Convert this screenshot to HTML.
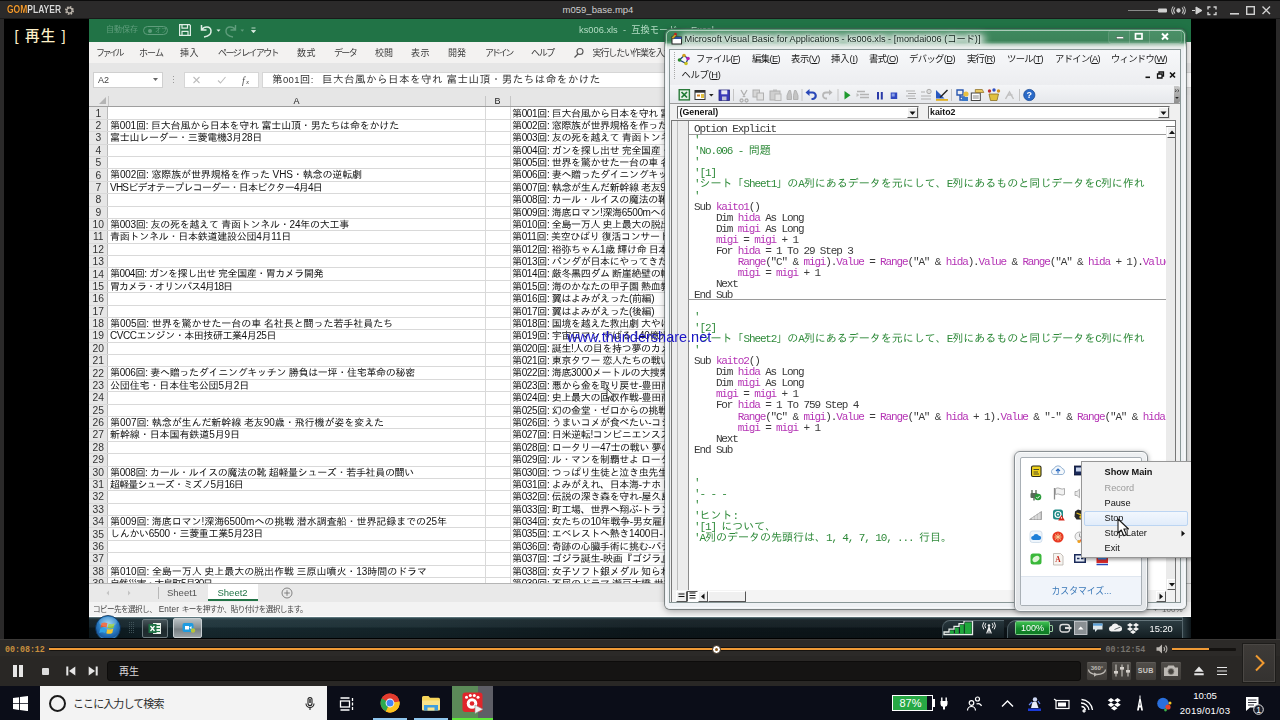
<!DOCTYPE html>
<html lang="ja"><head><meta charset="utf-8"><title>GOM Player - m059_base.mp4</title>
<style>
html,body{margin:0;padding:0;}
body{width:1280px;height:720px;overflow:hidden;background:#000;position:relative;font-family:"Liberation Sans","Noto Sans CJK JP",sans-serif;}
.a{position:absolute;}
div{box-sizing:border-box;}
.ui{font-family:"Liberation Sans","Noto Sans CJK JP",sans-serif;}
.cell{font-family:"Liberation Sans","IPAGothic",sans-serif;font-size:10px;line-height:12px;white-space:nowrap;color:#111;}
.rn{position:absolute;left:0;width:18.5px;text-align:center;font-size:10.3px;line-height:12px;color:#333;font-family:"Liberation Sans",sans-serif;}
.code{font-family:"Liberation Mono","IPAGothic",monospace;font-size:11px;letter-spacing:-1.13px;white-space:pre;position:absolute;left:22px;height:11px;line-height:11px;color:#3a3a3a;}
.code b{font-weight:normal;color:#b534b5;}
.code i{font-style:normal;color:#2f8a3a;}
.code u{text-decoration:none;letter-spacing:0;}
</style></head><body>

<div class="a" id="gomtitle" style="left:0;top:0;width:1280px;height:19px;background:#2b2a2a;border-top:1px solid #0c0c0c;border-bottom:1px solid #1a1a1a;"></div>
<div class="a" style="left:0;top:19px;width:4px;height:620px;background:#2a2929;"></div>
<div class="a" style="left:1276px;top:19px;width:4px;height:620px;background:#2a2929;"></div>
<div class="a ui" style="left:7px;top:3.5px;font-size:10.3px;line-height:12px;font-weight:bold;color:#d9d9d9;text-shadow:0 0 1px #000;transform-origin:0 0;transform:scaleX(0.826);white-space:nowrap;"><span style="color:#f29a2e">GOM</span>PLAYER</div>
<svg class="a" style="left:64px;top:5px" width="11" height="11" viewBox="0 0 11 11"><circle cx="5.5" cy="5.5" r="3.6" fill="none" stroke="#bdb6ad" stroke-width="1.8" stroke-dasharray="1.6 1.2"/><circle cx="5.5" cy="5.5" r="2.6" fill="none" stroke="#bdb6ad" stroke-width="1.2"/></svg>
<div class="a ui" style="left:540px;top:4px;width:116px;text-align:center;font-size:9.5px;line-height:12px;color:#cfcfcf;">m059_base.mp4</div>
<svg class="a" style="left:1120px;top:0" width="160" height="19" viewBox="0 0 160 19">
<rect x="8" y="10" width="32" height="1" fill="#8a8a8a"/><rect x="38" y="8.5" width="9" height="4" rx="1" fill="#d0d0d0"/>
<g stroke="#d0d0d0" fill="none" stroke-width="1.1"><circle cx="58.5" cy="10.5" r="1.6" fill="#d0d0d0"/><path d="M55 7.5a4.5 4.5 0 0 0 0 6M62 7.5a4.5 4.5 0 0 1 0 6M53.3 6.5a6 6 0 0 0 0 8M63.7 6.5a6 6 0 0 1 0 8"/></g>
<path d="M72 10.5h3M76 7v7l6-3.5z" fill="#d0d0d0" stroke="#d0d0d0" stroke-width="1"/>
<g stroke="#d0d0d0" fill="none" stroke-width="1.4"><path d="M88 9.5v-2.5h2.5M93.500 7h2.500v2.500M96 12v2.500h-2.500M90.500 14.500h-2.500v-2.500"/></g>
<rect x="110" y="13" width="9" height="1.6" fill="#d0d0d0"/>
<rect x="126.700" y="6.700" width="7.600" height="7.600" fill="none" stroke="#d0d0d0" stroke-width="1.4"/>
<path d="M142.500 6.500l7.500 7.500M150 6.500l-7.500 7.500" stroke="#d0d0d0" stroke-width="1.4"/>
</svg>
<div class="a" style="left:14.5px;top:27px;font-size:14.5px;line-height:19px;letter-spacing:1.2px;font-weight:500;color:#fdf0c8;font-family:'Liberation Sans','Noto Sans CJK JP',sans-serif;white-space:nowrap;">[ 再生 ]</div>
<div class="a" id="video" style="left:89px;top:19px;width:1102px;height:619px;overflow:hidden;background:#fff;filter:blur(0.45px);">
<div class="a" style="left:0px;top:0px;width:1102px;height:23px;background:#217346;"></div>
<div class="a ui" style="left:17px;top:6px;font-size:8px;line-height:10px;color:#5f9d7c;white-space:nowrap;">自動保存</div>
<div class="a" style="left:54px;top:7px;width:25px;height:9px;border:1px solid #5f9d7c;border-radius:5px;"></div>
<div class="a" style="left:59px;top:9.5px;width:4px;height:4px;border-radius:2px;background:#5f9d7c;"></div>
<div class="a ui" style="left:66px;top:8px;font-size:6px;line-height:7px;color:#5f9d7c;">オフ</div>
<svg class="a" style="left:86px;top:2px;" width="90" height="18" viewBox="0 0 90 18">
<g fill="none" stroke="#dfeee5" stroke-width="1.2"><path d="M4.600 3.600h9.800l1 1v9.800h-10.800z"/><path d="M7 3.600v3.500h5.500v-3.500M7 14.400v-4h6v4"/>
<path d="M26.500 4v5h5M27 8.500c2-3.500 8.500-3.500 9 1s-4 6-7 6.500" stroke-width="1.5"/></g>
<path d="M41.500 8.500h4l-2 2.300z" fill="#dfeee5"/>
<g fill="none" stroke="#5f9d7c" stroke-width="1.400"><path d="M60.500 4v5h-5M60 8.500c-2-3.500-8.500-3.500-9 1s4 6 7 6.500"/></g>
<path d="M65.500 8.500h3.600l-1.800 2.200z" fill="#5f9d7c"/>
<path d="M76.500 7h4M76.500 9.500h4l-2 2.300z" fill="#dfeee5" stroke="#dfeee5" stroke-width="0.800"/>
</svg>
<div class="a ui" style="left:490px;top:5px;font-size:9.3px;line-height:12px;color:#b4dcc4;white-space:pre;">ks006.xls  -  互換モード  -  Excel</div>
<div class="a" style="left:0px;top:23px;width:1102px;height:20.5px;background:#f3f2f1;"></div>
<div class="a ui" style="letter-spacing:-2.504px;left:7px;top:28px;font-size:9px;line-height:12px;color:#3b3b3b;white-space:nowrap;">ファイル</div>
<div class="a ui" style="letter-spacing:-0.911px;left:50px;top:28px;font-size:9px;line-height:12px;color:#3b3b3b;white-space:nowrap;">ホーム</div>
<div class="a ui" style="letter-spacing:0.492px;left:91px;top:28px;font-size:9px;line-height:12px;color:#3b3b3b;white-space:nowrap;">挿入</div>
<div class="a ui" style="letter-spacing:-1.592px;left:129px;top:28px;font-size:9px;line-height:12px;color:#3b3b3b;white-space:nowrap;">ページ レイアウト</div>
<div class="a ui" style="letter-spacing:0.492px;left:208px;top:28px;font-size:9px;line-height:12px;color:#3b3b3b;white-space:nowrap;">数式</div>
<div class="a ui" style="letter-spacing:-1.672px;left:245px;top:28px;font-size:9px;line-height:12px;color:#3b3b3b;white-space:nowrap;">データ</div>
<div class="a ui" style="letter-spacing:-0.008px;left:286px;top:28px;font-size:9px;line-height:12px;color:#3b3b3b;white-space:nowrap;">校閲</div>
<div class="a ui" style="letter-spacing:0.492px;left:322px;top:28px;font-size:9px;line-height:12px;color:#3b3b3b;white-space:nowrap;">表示</div>
<div class="a ui" style="letter-spacing:-0.008px;left:359px;top:28px;font-size:9px;line-height:12px;color:#3b3b3b;white-space:nowrap;">開発</div>
<div class="a ui" style="letter-spacing:-2.254px;left:396px;top:28px;font-size:9px;line-height:12px;color:#3b3b3b;white-space:nowrap;">アドイン</div>
<div class="a ui" style="letter-spacing:-1.339px;left:442px;top:28px;font-size:9px;line-height:12px;color:#3b3b3b;white-space:nowrap;">ヘルプ</div>
<div class="a ui" style="letter-spacing:-1.092px;left:503.5px;top:28px;font-size:9px;line-height:12px;color:#3b3b3b;white-space:nowrap;">実行したい作業を入力してください</div>
<svg class="a" style="left:484px;top:28px;" width="12" height="12" viewBox="0 0 12 12"><circle cx="7" cy="4.500" r="3" fill="none" stroke="#555" stroke-width="1.100"/><path d="M5 7l-3.500 3.500" stroke="#555" stroke-width="1.300"/></svg>
<div class="a" style="left:0px;top:43.5px;width:1102px;height:33px;background:#e6e6e6;"></div>
<div class="a" style="left:4px;top:52.5px;width:70px;height:16px;background:#fff;border:1px solid #d0d0d0;"></div>
<div class="a" style="left:9px;top:54.5px;font-family:'Liberation Sans',sans-serif;font-size:9px;line-height:12px;color:#444;">A2</div>
<svg class="a" style="left:63px;top:58px;" width="8" height="6" viewBox="0 0 8 6"><path d="M1 1h5l-2.500 3z" fill="#666"/></svg>
<div class="a" style="left:84px;top:56.5px;width:1px;height:1.5px;background:#999;box-shadow:0 3px 0 #999,0 6px 0 #999;"></div>
<div class="a" style="left:94.5px;top:52.5px;width:75px;height:16px;background:#fff;border:1px solid #d6d6d6;"></div>
<svg class="a" style="left:94.5px;top:52.5px;" width="75" height="16" viewBox="0 0 75 16">
<path d="M9.500 5l6 6M15.500 5l-6 6" stroke="#bdbdbd" stroke-width="1.100" fill="none"/>
<path d="M34 8.500l2.500 2.500l5-6" stroke="#bdbdbd" stroke-width="1.100" fill="none"/>
<text x="58" y="11.500" font-family="Liberation Serif, serif" font-style="italic" font-size="10" fill="#555">f</text><text x="62" y="12" font-family="Liberation Serif, serif" font-style="italic" font-size="7" fill="#555">x</text>
</svg>
<div class="a" style="left:172.5px;top:52.5px;width:930px;height:16px;background:#fff;border:1px solid #d6d6d6;"></div>
<div class="a" id="ftext" style="left:183px;top:54px;font-family:'Liberation Sans','IPAGothic',sans-serif;font-size:10.5px;line-height:13px;color:#333;white-space:nowrap;letter-spacing:0.52px;">第<span style="font-size:9.500px;letter-spacing:0.300px">001</span>回<span style="font-size:9.500px;letter-spacing:2.900px">: </span>巨大台風から日本を守れ 富士山頂・男たちは命をかけた</div>
<div class="a" style="left:0px;top:76px;width:1102px;height:12px;background:#e6e6e6;border-bottom:1px solid #9f9f9f;"></div>
<svg class="a" style="left:10px;top:78px;" width="8" height="8" viewBox="0 0 8 8"><path d="M7 0v7h-7z" fill="#b4b4b4"/></svg>
<div class="a" style="left:19px;top:76.5px;width:377px;text-align:center;font-family:'Liberation Sans',sans-serif;font-size:9px;line-height:11px;color:#222;">A</div>
<div class="a" style="left:396px;top:76.5px;width:25px;text-align:center;font-family:'Liberation Sans',sans-serif;font-size:9px;line-height:11px;color:#222;">B</div>
<div class="a" style="left:396px;top:77px;width:1px;height:10px;background:#c6c6c6;"></div>
<div class="a" style="left:421px;top:77px;width:1px;height:10px;background:#c6c6c6;"></div>
<div class="a" style="left:19px;top:77px;width:1px;height:10px;background:#c6c6c6;"></div>
<div class="a" id="grid" style="left:0px;top:88px;width:1102px;height:476px;background:#fff;overflow:hidden;">
<div class="a" style="left:0;top:0;width:19px;height:476px;background:#e6e6e6;border-right:1px solid #b9b9b9;"></div>
<div class="a" style="left:0;top:11.88px;width:1102px;height:1px;background:#d9d9d9;"></div>
<div class="rn" style="top:0.60px;">1</div>
<div class="a cell cc" style="letter-spacing:-0.35px;left:423px;top:0.50px;">第001回: 巨大台風から日本を守れ 富士山頂</div>
<div class="a" style="left:0;top:24.26px;width:1102px;height:1px;background:#d9d9d9;"></div>
<div class="rn" style="top:12.98px;">2</div>
<div class="a cell ca" style="letter-spacing:-0.183px;left:21px;top:12.88px;">第001回: 巨大台風から日本を守れ 富士山頂・男たちは命をかけた</div>
<div class="a cell cc" style="letter-spacing:-0.35px;left:423px;top:12.88px;">第002回: 窓際族が世界規格を作った VHS</div>
<div class="a" style="left:0;top:36.64px;width:1102px;height:1px;background:#d9d9d9;"></div>
<div class="rn" style="top:25.36px;">3</div>
<div class="a cell ca" style="letter-spacing:-0.276px;left:21px;top:25.26px;">富士山レーダー・三菱電機3月28日</div>
<div class="a cell cc" style="letter-spacing:-0.35px;left:423px;top:25.26px;">第003回: 友の死を越えて 青函トンネル</div>
<div class="a" style="left:0;top:49.02px;width:1102px;height:1px;background:#d9d9d9;"></div>
<div class="rn" style="top:37.74px;">4</div>
<div class="a cell cc" style="letter-spacing:-0.35px;left:423px;top:37.64px;">第004回: ガンを探し出せ 完全国産・胃カメラ</div>
<div class="a" style="left:0;top:61.40px;width:1102px;height:1px;background:#d9d9d9;"></div>
<div class="rn" style="top:50.12px;">5</div>
<div class="a cell cc" style="letter-spacing:-0.35px;left:423px;top:50.02px;">第005回: 世界を驚かせた一台の車 名社長</div>
<div class="a" style="left:0;top:73.78px;width:1102px;height:1px;background:#d9d9d9;"></div>
<div class="rn" style="top:62.50px;">6</div>
<div class="a cell ca" style="letter-spacing:-0.120px;left:21px;top:62.40px;">第002回: 窓際族が世界規格を作った VHS・執念の逆転劇</div>
<div class="a cell cc" style="letter-spacing:-0.35px;left:423px;top:62.40px;">第006回: 妻へ贈ったダイニングキッチン 勝負</div>
<div class="a" style="left:0;top:86.16px;width:1102px;height:1px;background:#d9d9d9;"></div>
<div class="rn" style="top:74.88px;">7</div>
<div class="a cell ca" style="letter-spacing:-0.787px;left:21px;top:74.78px;">VHSビデオテープレコーダー・日本ビクター4月4日</div>
<div class="a cell cc" style="letter-spacing:-0.35px;left:423px;top:74.78px;">第007回: 執念が生んだ新幹線 老友90歳</div>
<div class="a" style="left:0;top:98.54px;width:1102px;height:1px;background:#d9d9d9;"></div>
<div class="rn" style="top:87.26px;">8</div>
<div class="a cell cc" style="letter-spacing:-0.35px;left:423px;top:87.16px;">第008回: カール・ルイスの魔法の靴 超軽量</div>
<div class="a" style="left:0;top:110.92px;width:1102px;height:1px;background:#d9d9d9;"></div>
<div class="rn" style="top:99.64px;">9</div>
<div class="a cell cc" style="letter-spacing:-0.35px;left:423px;top:99.54px;">第009回: 海底ロマン!深海6500mへの挑戦</div>
<div class="a" style="left:0;top:123.30px;width:1102px;height:1px;background:#d9d9d9;"></div>
<div class="rn" style="top:112.02px;">10</div>
<div class="a cell ca" style="letter-spacing:-0.247px;left:21px;top:111.92px;">第003回: 友の死を越えて 青函トンネル・24年の大工事</div>
<div class="a cell cc" style="letter-spacing:-0.35px;left:423px;top:111.92px;">第010回: 全島一万人 史上最大の脱出作戦</div>
<div class="a" style="left:0;top:135.68px;width:1102px;height:1px;background:#d9d9d9;"></div>
<div class="rn" style="top:124.40px;">11</div>
<div class="a cell ca" style="letter-spacing:-0.248px;left:21px;top:124.30px;">青函トンネル・日本鉄道建設公団4月11日</div>
<div class="a cell cc" style="letter-spacing:-0.35px;left:423px;top:124.30px;">第011回: 美空ひばり 復活コンサート</div>
<div class="a" style="left:0;top:148.06px;width:1102px;height:1px;background:#d9d9d9;"></div>
<div class="rn" style="top:136.78px;">12</div>
<div class="a cell cc" style="letter-spacing:-0.35px;left:423px;top:136.68px;">第012回: 裕弥ちゃん1歳 輝け命 日本初</div>
<div class="a" style="left:0;top:160.44px;width:1102px;height:1px;background:#d9d9d9;"></div>
<div class="rn" style="top:149.16px;">13</div>
<div class="a cell cc" style="letter-spacing:-0.35px;left:423px;top:149.06px;">第013回: パンダが日本にやってきた</div>
<div class="a" style="left:0;top:172.82px;width:1102px;height:1px;background:#d9d9d9;"></div>
<div class="rn" style="top:161.54px;">14</div>
<div class="a cell ca" style="letter-spacing:-0.463px;left:21px;top:161.44px;">第004回: ガンを探し出せ 完全国産・胃カメラ開発</div>
<div class="a cell cc" style="letter-spacing:-0.35px;left:423px;top:161.44px;">第014回: 厳冬黒四ダム 断崖絶壁の輸送</div>
<div class="a" style="left:0;top:185.20px;width:1102px;height:1px;background:#d9d9d9;"></div>
<div class="rn" style="top:173.92px;">15</div>
<div class="a cell ca" style="letter-spacing:-0.979px;left:21px;top:173.82px;">胃カメラ・オリンパス4月18日</div>
<div class="a cell cc" style="letter-spacing:-0.35px;left:423px;top:173.82px;">第015回: 海のかなたの甲子園 熱血教師</div>
<div class="a" style="left:0;top:197.58px;width:1102px;height:1px;background:#d9d9d9;"></div>
<div class="rn" style="top:186.30px;">16</div>
<div class="a cell cc" style="letter-spacing:-0.35px;left:423px;top:186.20px;">第016回: 翼はよみがえった(前編)</div>
<div class="a" style="left:0;top:209.96px;width:1102px;height:1px;background:#d9d9d9;"></div>
<div class="rn" style="top:198.68px;">17</div>
<div class="a cell cc" style="letter-spacing:-0.35px;left:423px;top:198.58px;">第017回: 翼はよみがえった(後編)</div>
<div class="a" style="left:0;top:222.34px;width:1102px;height:1px;background:#d9d9d9;"></div>
<div class="rn" style="top:211.06px;">18</div>
<div class="a cell ca" style="letter-spacing:-0.063px;left:21px;top:210.96px;">第005回: 世界を驚かせた一台の車 名社長と闘った若手社員たち</div>
<div class="a cell cc" style="letter-spacing:-0.35px;left:423px;top:210.96px;">第018回: 国境を越えた救出劇 大やけど</div>
<div class="a" style="left:0;top:234.72px;width:1102px;height:1px;background:#d9d9d9;"></div>
<div class="rn" style="top:223.44px;">19</div>
<div class="a cell ca" style="letter-spacing:-0.452px;left:21px;top:223.34px;">CVCCエンジン・本田技研工業4月25日</div>
<div class="a cell cc" style="letter-spacing:-0.35px;left:423px;top:223.34px;">第019回: 宇宙ロマン すばる 140億光年</div>
<div class="a" style="left:0;top:247.10px;width:1102px;height:1px;background:#d9d9d9;"></div>
<div class="rn" style="top:235.82px;">20</div>
<div class="a cell cc" style="letter-spacing:-0.35px;left:423px;top:235.72px;">第020回: 誕生!人の目を持つ夢のカメラ</div>
<div class="a" style="left:0;top:259.48px;width:1102px;height:1px;background:#d9d9d9;"></div>
<div class="rn" style="top:248.20px;">21</div>
<div class="a cell cc" style="letter-spacing:-0.35px;left:423px;top:248.10px;">第021回: 東京タワー 恋人たちの戦い</div>
<div class="a" style="left:0;top:271.86px;width:1102px;height:1px;background:#d9d9d9;"></div>
<div class="rn" style="top:260.58px;">22</div>
<div class="a cell ca" style="letter-spacing:-0.287px;left:21px;top:260.48px;">第006回: 妻へ贈ったダイニングキッチン 勝負は一坪・住宅革命の秘密</div>
<div class="a cell cc" style="letter-spacing:-0.35px;left:423px;top:260.48px;">第022回: 海底3000メートルの大捜索</div>
<div class="a" style="left:0;top:284.24px;width:1102px;height:1px;background:#d9d9d9;"></div>
<div class="rn" style="top:272.96px;">23</div>
<div class="a cell ca" style="letter-spacing:-0.142px;left:21px;top:272.86px;">公団住宅・日本住宅公団5月2日</div>
<div class="a cell cc" style="letter-spacing:-0.35px;left:423px;top:272.86px;">第023回: 悪から金を取り戻せ-豊田商事</div>
<div class="a" style="left:0;top:296.62px;width:1102px;height:1px;background:#d9d9d9;"></div>
<div class="rn" style="top:285.34px;">24</div>
<div class="a cell cc" style="letter-spacing:-0.35px;left:423px;top:285.24px;">第024回: 史上最大の回収作戦-豊田商事</div>
<div class="a" style="left:0;top:309.00px;width:1102px;height:1px;background:#d9d9d9;"></div>
<div class="rn" style="top:297.72px;">25</div>
<div class="a cell cc" style="letter-spacing:-0.35px;left:423px;top:297.62px;">第025回: 幻の金堂・ゼロからの挑戦</div>
<div class="a" style="left:0;top:321.38px;width:1102px;height:1px;background:#d9d9d9;"></div>
<div class="rn" style="top:310.10px;">26</div>
<div class="a cell ca" style="letter-spacing:-0.067px;left:21px;top:310.00px;">第007回: 執念が生んだ新幹線 老友90歳・飛行機が姿を変えた</div>
<div class="a cell cc" style="letter-spacing:-0.35px;left:423px;top:310.00px;">第026回: うまいコメが食べたい-コシヒカリ</div>
<div class="a" style="left:0;top:333.76px;width:1102px;height:1px;background:#d9d9d9;"></div>
<div class="rn" style="top:322.48px;">27</div>
<div class="a cell ca" style="letter-spacing:-0.080px;left:21px;top:322.38px;">新幹線・日本国有鉄道5月9日</div>
<div class="a cell cc" style="letter-spacing:-0.35px;left:423px;top:322.38px;">第027回: 日米逆転!コンビニエンスストア</div>
<div class="a" style="left:0;top:346.14px;width:1102px;height:1px;background:#d9d9d9;"></div>
<div class="rn" style="top:334.86px;">28</div>
<div class="a cell cc" style="letter-spacing:-0.35px;left:423px;top:334.76px;">第028回: ロータリー47士の戦い 夢のエンジン</div>
<div class="a" style="left:0;top:358.52px;width:1102px;height:1px;background:#d9d9d9;"></div>
<div class="rn" style="top:347.24px;">29</div>
<div class="a cell cc" style="letter-spacing:-0.35px;left:423px;top:347.14px;">第029回: ル・マンを制覇せよ ロータリー</div>
<div class="a" style="left:0;top:370.90px;width:1102px;height:1px;background:#d9d9d9;"></div>
<div class="rn" style="top:359.62px;">30</div>
<div class="a cell ca" style="letter-spacing:-0.315px;left:21px;top:359.52px;">第008回: カール・ルイスの魔法の靴 超軽量シューズ・若手社員の闘い</div>
<div class="a cell cc" style="letter-spacing:-0.35px;left:423px;top:359.52px;">第030回: つっぱり生徒と泣き虫先生</div>
<div class="a" style="left:0;top:383.28px;width:1102px;height:1px;background:#d9d9d9;"></div>
<div class="rn" style="top:372.00px;">31</div>
<div class="a cell ca" style="letter-spacing:-0.855px;left:21px;top:371.90px;">超軽量シューズ・ミズノ5月16日</div>
<div class="a cell cc" style="letter-spacing:-0.35px;left:423px;top:371.90px;">第031回: よみがえれ、日本海-ナホトカ号</div>
<div class="a" style="left:0;top:395.66px;width:1102px;height:1px;background:#d9d9d9;"></div>
<div class="rn" style="top:384.38px;">32</div>
<div class="a cell cc" style="letter-spacing:-0.35px;left:423px;top:384.28px;">第032回: 伝説の深き森を守れ-屋久島</div>
<div class="a" style="left:0;top:408.04px;width:1102px;height:1px;background:#d9d9d9;"></div>
<div class="rn" style="top:396.76px;">33</div>
<div class="a cell cc" style="letter-spacing:-0.35px;left:423px;top:396.66px;">第033回: 町工場、世界へ翔ぶ-トランジスタ</div>
<div class="a" style="left:0;top:420.42px;width:1102px;height:1px;background:#d9d9d9;"></div>
<div class="rn" style="top:409.14px;">34</div>
<div class="a cell ca" style="letter-spacing:-0.061px;left:21px;top:409.04px;">第009回: 海底ロマン!深海6500mへの挑戦 潜水調査船・世界記録までの25年</div>
<div class="a cell cc" style="letter-spacing:-0.35px;left:423px;top:409.04px;">第034回: 女たちの10年戦争-男女雇用</div>
<div class="a" style="left:0;top:432.80px;width:1102px;height:1px;background:#d9d9d9;"></div>
<div class="rn" style="top:421.52px;">35</div>
<div class="a cell ca" style="letter-spacing:-0.312px;left:21px;top:421.42px;">しんかい6500・三菱重工業5月23日</div>
<div class="a cell cc" style="letter-spacing:-0.35px;left:423px;top:421.42px;">第035回: エベレストへ熱き1400日-日本女子</div>
<div class="a" style="left:0;top:445.18px;width:1102px;height:1px;background:#d9d9d9;"></div>
<div class="rn" style="top:433.90px;">36</div>
<div class="a cell cc" style="letter-spacing:-0.35px;left:423px;top:433.80px;">第036回: 奇跡の心臓手術に挑む-バチスタ</div>
<div class="a" style="left:0;top:457.56px;width:1102px;height:1px;background:#d9d9d9;"></div>
<div class="rn" style="top:446.28px;">37</div>
<div class="a cell cc" style="letter-spacing:-0.35px;left:423px;top:446.18px;">第037回: ゴジラ誕生-映画『ゴジラ』特撮</div>
<div class="a" style="left:0;top:469.94px;width:1102px;height:1px;background:#d9d9d9;"></div>
<div class="rn" style="top:458.66px;">38</div>
<div class="a cell ca" style="letter-spacing:-0.052px;left:21px;top:458.56px;">第010回: 全島一万人 史上最大の脱出作戦 三原山噴火・13時間のドラマ</div>
<div class="a cell cc" style="letter-spacing:-0.35px;left:423px;top:458.56px;">第038回: 女子ソフト銀メダル 知られざる</div>
<div class="a" style="left:0;top:482.32px;width:1102px;height:1px;background:#d9d9d9;"></div>
<div class="rn" style="top:471.04px;">39</div>
<div class="a cell ca" style="letter-spacing:-1.130px;left:21px;top:470.94px;">自然災害・大島町5月30日</div>
<div class="a cell cc" style="letter-spacing:-0.35px;left:423px;top:470.94px;">第039回: 不屈のドラマ 瀬戸大橋-世紀</div>
<div class="a" style="left:396px;top:0;width:1px;height:476px;background:#d9d9d9;"></div>
<div class="a" style="left:421px;top:0;width:1px;height:476px;background:#d9d9d9;"></div>
</div>
<div class="a" style="left:1079px;top:76px;width:23px;height:508px;background:#e9e9e9;border-left:1px solid #cfcfcf;"></div>
<div class="a" style="left:0px;top:564px;width:1102px;height:19px;background:#e9e9e9;border-top:1px solid #b5b5b5;"></div>
<div class="a" style="left:119px;top:565px;width:50px;height:17px;background:#fff;border-bottom:2px solid #217346;"></div>
<div class="a ui" style="left:78px;top:567.5px;font-size:9.500px;line-height:12px;color:#555;">Sheet1</div>
<div class="a ui" style="left:128.5px;top:567.5px;font-size:9.500px;line-height:12px;color:#217346;">Sheet2</div>
<div class="a" style="left:69px;top:568px;width:1px;height:12px;background:#b8b8b8;"></div>
<svg class="a" style="left:11px;top:568px;" width="60" height="12" viewBox="0 0 60 12"><path d="M9 3.500l-2.500 2.500l2.500 2.500zM28 3.500l2.500 2.500l-2.500 2.500z" fill="#c4c4c4"/></svg>
<svg class="a" style="left:191.5px;top:567.5px;" width="12" height="12" viewBox="0 0 12 12"><circle cx="6" cy="6" r="5" fill="none" stroke="#777" stroke-width="0.900"/><path d="M6 3.200v5.600M3.200 6h5.600" stroke="#777" stroke-width="0.900"/></svg>
<div class="a" style="left:0px;top:583px;width:1102px;height:14px;background:#f3f3f3;"></div>
<div class="a ui" style="letter-spacing:-0.578px;left:4px;top:585px;font-size:7.6px;line-height:11px;color:#444;white-space:nowrap;">コピー先を選択し、<span style="font-size:8.2px;letter-spacing:0.2px"> Enter </span>キーを押すか、貼り付けを選択します。</div>
<div class="a ui" style="left:1064px;top:585px;font-size:8px;line-height:11px;color:#777;white-space:nowrap;">+&nbsp;&nbsp;100%</div>
<div class="a" id="vba" style="left:576px;top:10px;width:521px;height:580px;border-radius:6px 6px 5px 5px;background:linear-gradient(180deg,#4d936b 0px,#3f895e 2px,#3c8359 11.5px,#5d9a76 13.5px,#b5cdbf 15.5px,#e2e9e5 18px,#eef1f4 21px,#eef1f4 100%);box-shadow:0 0 0 1px rgba(70,80,80,0.550),0 2px 7px rgba(0,0,0,0.350);">
<div class="a" style="left:1px;top:1px;right:1px;bottom:1px;border:1px solid rgba(255,255,255,0.550);border-radius:5px;"></div>
<div class="a" style="left:15px;top:5px;width:306px;height:11px;border-radius:6px;background:rgba(255,255,255,0.620);filter:blur(3.500px);"></div>
<svg class="a" style="left:4.5px;top:3px;" width="13" height="13" viewBox="0 0 13 13"><rect x="2" y="5" width="9.500" height="7" fill="#fff" stroke="#222" stroke-width="1"/><rect x="2" y="5" width="9.500" height="2" fill="#2b4fa0"/><path d="M1 6l4-4.500l2 1.500l-3.500 4z" fill="#c8a020" stroke="#333" stroke-width="0.600"/><circle cx="5.500" cy="2" r="1.300" fill="#c02020"/></svg>
<div class="a ui" style="left:19.5px;top:3.5px;font-size:9.200px;line-height:12px;color:#10221a;white-space:nowrap;text-shadow:0 0 3px #fff,0 0 5px #fff,0 0 7px rgba(255,255,255,0.800);">Microsoft Visual Basic for Applications - ks006.xls - [mondai006 (コード)]</div>
<svg class="a" style="left:443px;top:0.5px;" width="74" height="16" viewBox="0 0 74 16">
<rect x="0.500" y="0" width="73" height="13.500" rx="3" fill="rgba(255,255,255,0.060)" stroke="rgba(255,255,255,0.130)" stroke-width="1"/>
<path d="M21.500 0v13.500M41.500 0v13.500" stroke="rgba(255,255,255,0.160)"/>
<rect x="8.500" y="6.800" width="7" height="2" fill="#fff" stroke="#3a4a42" stroke-width="0.400"/>
<rect x="27.500" y="3.700" width="6.500" height="5.200" fill="none" stroke="#fff" stroke-width="1.700"/>
<path d="M54 3.500l6 6M60 3.500l-6 6" stroke="#fff" stroke-width="2"/>
</svg>
<div class="a" id="client" style="left:4px;top:19.5px;width:512px;height:554px;background:#f0f0f0;border:1px solid #8a9898;overflow:hidden;">
<div class="a" style="left:0;top:0;width:510px;height:35.500px;background:linear-gradient(180deg,#f7f8fa,#ecedf0);"></div>
<div class="a" style="left:3.5px;top:2.5px;width:1px;height:1px;background:#a8a8a8;box-shadow:0 2px 0 #a8a8a8,0 4px 0 #a8a8a8,0 6px 0 #a8a8a8,0 8px 0 #a8a8a8,0 10px 0 #a8a8a8,0 12px 0 #a8a8a8,0 14px 0 #a8a8a8,0 16px 0 #a8a8a8,0 18px 0 #a8a8a8,0 20px 0 #a8a8a8,0 22px 0 #a8a8a8,0 24px 0 #a8a8a8,0 26px 0 #a8a8a8;"></div>
<div class="a" style="left:3.5px;top:38.5px;width:1px;height:1px;background:#a8a8a8;box-shadow:0 2px 0 #a8a8a8,0 4px 0 #a8a8a8,0 6px 0 #a8a8a8,0 8px 0 #a8a8a8,0 10px 0 #a8a8a8,0 12px 0 #a8a8a8;"></div>
<svg class="a" style="left:6.5px;top:3px;" width="14" height="13" viewBox="0 0 14 13"><path d="M2.500 7l4.500-4.500l4 3l-2 5z" fill="none" stroke="#1d3f7a" stroke-width="1.200"/><circle cx="7" cy="2.500" r="1.800" fill="#d0a020"/><circle cx="2.500" cy="7" r="1.800" fill="#2a8a2a"/><circle cx="11" cy="5.500" r="1.800" fill="#b020b0"/><circle cx="9" cy="10.500" r="1.800" fill="#c8c020"/></svg>
<div class="a ui mn" style="letter-spacing:-0.728px;left:26px;top:3.5px;font-size:9.300px;line-height:12px;color:#1a1a1a;white-space:nowrap;">ファイル(<u>F</u>)</div>
<div class="a ui mn" style="letter-spacing:-0.603px;left:82px;top:3.5px;font-size:9.300px;line-height:12px;color:#1a1a1a;white-space:nowrap;">編集(<u>E</u>)</div>
<div class="a ui mn" style="letter-spacing:-0.403px;left:121px;top:3.5px;font-size:9.300px;line-height:12px;color:#1a1a1a;white-space:nowrap;">表示(<u>V</u>)</div>
<div class="a ui mn" style="letter-spacing:-0.081px;left:161px;top:3.5px;font-size:9.300px;line-height:12px;color:#1a1a1a;white-space:nowrap;">挿入(<u>I</u>)</div>
<div class="a ui mn" style="letter-spacing:-0.609px;left:199px;top:3.5px;font-size:9.300px;line-height:12px;color:#1a1a1a;white-space:nowrap;">書式(<u>O</u>)</div>
<div class="a ui mn" style="letter-spacing:-0.589px;left:239px;top:3.5px;font-size:9.300px;line-height:12px;color:#1a1a1a;white-space:nowrap;">デバッグ(<u>D</u>)</div>
<div class="a ui mn" style="letter-spacing:-0.706px;left:297px;top:3.5px;font-size:9.300px;line-height:12px;color:#1a1a1a;white-space:nowrap;">実行(<u>R</u>)</div>
<div class="a ui mn" style="letter-spacing:-0.633px;left:337px;top:3.5px;font-size:9.300px;line-height:12px;color:#1a1a1a;white-space:nowrap;">ツール(<u>T</u>)</div>
<div class="a ui mn" style="letter-spacing:-0.658px;left:385px;top:3.5px;font-size:9.300px;line-height:12px;color:#1a1a1a;white-space:nowrap;">アドイン(<u>A</u>)</div>
<div class="a ui mn" style="letter-spacing:-0.686px;left:441px;top:3.5px;font-size:9.300px;line-height:12px;color:#1a1a1a;white-space:nowrap;">ウィンドウ(<u>W</u>)</div>
<div class="a ui mn" style="letter-spacing:-0.305px;left:11.5px;top:19.5px;font-size:9.300px;line-height:12px;color:#1a1a1a;white-space:nowrap;">ヘルプ(<u>H</u>)</div>
<svg class="a" style="left:475px;top:20.5px;" width="32" height="10" viewBox="0 0 32 10"><rect x="0.500" y="6.500" width="4.500" height="1.600" fill="#111"/><path d="M12.500 4h4.500v4h-4.500zM14 4v-2h4.500v4h-1.500" fill="none" stroke="#111" stroke-width="1.300"/><path d="M25 2.500l5 5M30 2.500l-5 5" stroke="#111" stroke-width="1.600"/></svg>
<div class="a" style="left:0;top:35.5px;width:510px;height:19px;background:linear-gradient(180deg,#f4f5f7,#e6e8ec);border-bottom:1px solid #9a9a9a;"></div>
<svg class="a" style="left:5.5px;top:36px;" width="440" height="18" viewBox="0 0 440 18">
<!-- excel -->
<rect x="3.200" y="3.700" width="10.200" height="10.200" fill="#e6f0e6" stroke="#2a7a3a" stroke-width="1.400"/><path d="M5.500 6l5.500 5.500M11 6l-5.500 5.500" stroke="#1f7a33" stroke-width="1.700"/>
<!-- userform -->
<rect x="19" y="4.500" width="10" height="9" fill="#fff" stroke="#333" stroke-width="1"/><rect x="19" y="4.500" width="10" height="2.200" fill="#333"/><rect x="21" y="8.500" width="3" height="2" fill="#d08020"/><rect x="25" y="8" width="3" height="4" fill="#e0c040"/>
<path d="M33 8h4.600l-2.300 2.600z" fill="#222"/>
<!-- save -->
<rect x="43" y="4" width="10.500" height="10.500" fill="#3a3ab8" stroke="#22227a" stroke-width="0.800"/><rect x="45.300" y="4.300" width="6" height="4" fill="#e8e8f4"/><rect x="46" y="10.500" width="4.500" height="3.800" fill="#c0c0d8"/>
<path d="M57.500 3v12" stroke="#c4c4c4"/>
<!-- cut copy paste find (disabled) -->
<path d="M65 4l4 7M71 4l-4 7M65.500 13a1.500 1.500 0 1 0 0.100 0M70.500 13a1.500 1.500 0 1 0 0.100 0" stroke="#b0b0b0" stroke-width="1.300" fill="none"/>
<rect x="77" y="4" width="6.500" height="7" fill="#d6d6d6" stroke="#b0b0b0"/><rect x="81" y="7" width="6.500" height="7" fill="#e2e2e2" stroke="#b0b0b0"/>
<rect x="94" y="5" width="10" height="9" fill="#cfcfcf" stroke="#b0b0b0"/><rect x="97" y="3.500" width="4" height="2.500" fill="#bdbdbd"/><rect x="99" y="8" width="6" height="6.500" fill="#e4e4e4" stroke="#b8b8b8"/>
<path d="M111 13.500v-4l2-5h1.500l1 5v4zM117.500 13.500v-4l1-5h1.500l2 5v4z" fill="#c4c4c4" stroke="#aaa" stroke-width="0.800"/>
<path d="M126 3v12" stroke="#c4c4c4"/>
<!-- undo redo -->
<path d="M131 6.500h5.500a3.200 3.200 0 0 1 0 6.500h-1" fill="none" stroke="#2a48b8" stroke-width="2.200"/><path d="M129.500 6.500l4-3.500v7z" fill="#2a48b8"/>
<path d="M155 6.500h-5a3 3 0 0 0 0 6h1" fill="none" stroke="#b8b8b8" stroke-width="1.800"/><path d="M156.500 6.500l-3.500-3v6z" fill="#b8b8b8"/>
<path d="M162 3v12" stroke="#c4c4c4"/>
<!-- run -->
<path d="M168.500 5l6 4.200l-6 4.200z" fill="#1f9a2f"/>
<path d="M181 5.500h8M184 8.500h9M184 11.500h9" stroke="#b4b4b4" stroke-width="1.500"/><path d="M180.500 7l3 2-3 2z" fill="#c0c0c0"/>
<rect x="201" y="6" width="2" height="7.500" fill="#2a3aa8"/><rect x="204.800" y="6" width="2" height="7.500" fill="#2a3aa8"/>
<rect x="214.700" y="6.500" width="6.500" height="6.500" fill="#3048c0"/><rect x="215.700" y="7.500" width="3" height="3" fill="#8aa0e8"/>
<path d="M230 5h9M232 7.500h8M230 10h9M232 12.500h8" stroke="#b0b0b0" stroke-width="1"/>
<path d="M245 6h4M245 10h10M245 13h10" stroke="#b0b0b0" stroke-width="1.200"/><circle cx="253" cy="5.500" r="2.200" fill="#ddd" stroke="#aaa"/>
<!-- design mode -->
<path d="M260 13h12v1.800h-12z" fill="#e0b020"/><path d="M260 4v8.500h8.500z" fill="#2858c0"/><path d="M264 11.500l7.500-7.500" stroke="#222" stroke-width="1.400"/>
<path d="M275.500 3v12" stroke="#c4c4c4"/>
<!-- project explorer -->
<path d="M281 4h6v5h-6zM284 9v5h7M284 11h5" fill="none" stroke="#2a58b0" stroke-width="1.400"/><circle cx="290" cy="8" r="2.600" fill="#e8c040"/><rect x="286" y="11" width="6" height="4" fill="#3a78c8"/>
<!-- properties -->
<g transform="translate(-3.7,0)">
<rect x="299" y="7" width="9" height="7.500" fill="#fff" stroke="#444" stroke-width="1"/><path d="M300.500 10h6M300.500 12h6" stroke="#666" stroke-width="0.800"/><path d="M303 3.500h7l1.500 3h-8.500z" fill="#e8c860" stroke="#8a6a20" stroke-width="0.700"/>
</g>
<!-- object browser -->
<g transform="translate(-5,0)">
<path d="M318 8h9.500l-1.500 6.500h-6.500z" fill="#e0c040" stroke="#8a7020" stroke-width="0.800"/><circle cx="318.500" cy="5" r="1.700" fill="#c03030"/><circle cx="323" cy="4" r="1.700" fill="#3050c0"/><circle cx="327.500" cy="5" r="1.700" fill="#d09020"/>
</g>
<!-- toolbox disabled -->
<g transform="translate(-7.5,0)">
<path d="M337 13l4-7l4 7M339 9l5 0" stroke="#c0c0c0" stroke-width="1.500" fill="none"/>
<path d="M351 3v12" stroke="#c4c4c4"/>
</g>
<!-- help -->
<g transform="translate(-8.2,0)">
<circle cx="361.500" cy="9" r="5.600" fill="#2a6ac8" stroke="#184a98" stroke-width="0.800"/><text x="361.500" y="12.300" text-anchor="middle" font-family="Liberation Sans, sans-serif" font-weight="bold" font-size="9" fill="#fff">?</text>
</g>
</svg>
<div class="a" style="left:504px;top:36.5px;width:6px;height:17px;background:linear-gradient(180deg,#c8c8c8,#8e8e8e);border-radius:0 2px 2px 0;"></div>
<svg class="a" style="left:504px;top:36.5px;" width="6" height="17" viewBox="0 0 6 17"><path d="M1 3.500l1.500 1.200l-1.500 1.200M3.500 3.500l1.500 1.200l-1.500 1.200" stroke="#222" stroke-width="0.700" fill="none"/><path d="M1.200 11h3.600l-1.800 2z" fill="#222"/></svg>
<div class="a" style="left:0;top:54.5px;width:510px;height:17px;background:#f0f0f0;"></div>
<div class="a" style="left:7px;top:56.2px;width:241.5px;height:13.500px;background:#fff;border:1px solid #6a6a6a;border-right-color:#d8d8d8;border-bottom-color:#d8d8d8;"></div>
<div class="a" style="left:9.5px;top:57.5px;font-family:'Liberation Sans',sans-serif;font-weight:bold;font-size:8.800px;line-height:11px;color:#111;white-space:nowrap;">(General)</div>
<div class="a" style="left:237px;top:57.2px;width:10.500px;height:11.500px;background:#f0f0f0;border:1px solid #fff;border-right-color:#555;border-bottom-color:#555;"></div>
<svg class="a" style="left:238.8px;top:61px;" width="7" height="5" viewBox="0 0 7 5"><path d="M0.500 0.500h6l-3 3.500z" fill="#111"/></svg>
<div class="a" style="left:257.5px;top:56.2px;width:242px;height:13.500px;background:#fff;border:1px solid #6a6a6a;border-right-color:#d8d8d8;border-bottom-color:#d8d8d8;"></div>
<div class="a" style="left:260px;top:57.5px;font-family:'Liberation Sans',sans-serif;font-weight:bold;font-size:8.800px;line-height:11px;color:#111;white-space:nowrap;">kaito2</div>
<div class="a" style="left:488px;top:57.2px;width:10.500px;height:11.500px;background:#f0f0f0;border:1px solid #fff;border-right-color:#555;border-bottom-color:#555;"></div>
<svg class="a" style="left:489.8px;top:61px;" width="7" height="5" viewBox="0 0 7 5"><path d="M0.500 0.500h6l-3 3.500z" fill="#111"/></svg>
<div class="a" id="pane" style="left:1px;top:70.5px;width:505px;height:481.5px;background:#fff;border-top:1px solid #777;border-left:1px solid #777;border-right:1px solid #777;overflow:hidden;">
<div class="a" style="left:0;top:0;width:16.500px;height:469px;background:#ececec;border-right:1px solid #8c8c8c;"></div>
<div class="a" style="left:4.500px;top:0;width:1px;height:469px;background:#bdbdbd;"></div>
<div class="a" style="left:17px;top:13px;width:477px;height:1px;background:#9a9a9a;"></div>
<div class="a" style="left:17px;top:178px;width:477px;height:1px;background:#9a9a9a;"></div>
<div class="code" style="top:3.20px;">Option Explicit</div>
<div class="code" style="top:14.25px;"><i>'</i></div>
<div class="code" style="top:25.30px;"><i>'No.006 - <u>問題</u></i></div>
<div class="code" style="top:36.35px;"><i>'</i></div>
<div class="code" style="top:47.40px;"><i>'[1]</i></div>
<div class="code" style="top:58.45px;"><i>'<u>シート「</u>Sheet1<u>」の</u>A<u>列にあるデータを元にして、</u>E<u>列にあるものと同じデータを</u>C<u>列に作れ</u></i></div>
<div class="code" style="top:69.50px;"><i>'</i></div>
<div class="code" style="top:80.55px;">Sub <b>kaito1</b>()</div>
<div class="code" style="top:91.60px;">    Dim <b>hida</b> As Long</div>
<div class="code" style="top:102.65px;">    Dim <b>migi</b> As Long</div>
<div class="code" style="top:113.70px;">    <b>migi</b> = <b>migi</b> + 1</div>
<div class="code" style="top:124.75px;">    For <b>hida</b> = 1 To 29 Step 3</div>
<div class="code" style="top:135.80px;">        <b>Range</b>("C" &amp; <b>migi</b>).<b>Value</b> = <b>Range</b>("A" &amp; <b>hida</b>).<b>Value</b> &amp; <b>Range</b>("A" &amp; <b>hida</b> + 1).<b>Value</b> &amp; <b>Range</b>("A" &amp; <b>hida</b> + 2).<b>Value</b></div>
<div class="code" style="top:146.85px;">        <b>migi</b> = <b>migi</b> + 1</div>
<div class="code" style="top:157.90px;">    Next</div>
<div class="code" style="top:168.95px;">End Sub</div>
<div class="code" style="top:191.05px;"><i>'</i></div>
<div class="code" style="top:202.10px;"><i>'[2]</i></div>
<div class="code" style="top:213.15px;"><i>'<u>シート「</u>Sheet2<u>」の</u>A<u>列にあるデータを元にして、</u>E<u>列にあるものと同じデータを</u>C<u>列に作れ</u></i></div>
<div class="code" style="top:224.20px;"><i>'</i></div>
<div class="code" style="top:235.25px;">Sub <b>kaito2</b>()</div>
<div class="code" style="top:246.30px;">    Dim <b>hida</b> As Long</div>
<div class="code" style="top:257.35px;">    Dim <b>migi</b> As Long</div>
<div class="code" style="top:268.40px;">    <b>migi</b> = <b>migi</b> + 1</div>
<div class="code" style="top:279.45px;">    For <b>hida</b> = 1 To 759 Step 4</div>
<div class="code" style="top:290.50px;">        <b>Range</b>("C" &amp; <b>migi</b>).<b>Value</b> = <b>Range</b>("A" &amp; <b>hida</b> + 1).<b>Value</b> &amp; "-" &amp; <b>Range</b>("A" &amp; <b>hida</b> + 2).<b>Value</b></div>
<div class="code" style="top:301.55px;">        <b>migi</b> = <b>migi</b> + 1</div>
<div class="code" style="top:312.60px;">    Next</div>
<div class="code" style="top:323.65px;">End Sub</div>
<div class="code" style="top:356.80px;"><i>'</i></div>
<div class="code" style="top:367.85px;"><i>'- - -</i></div>
<div class="code" style="top:378.90px;"><i>'</i></div>
<div class="code" style="top:389.95px;"><i>'<u>ヒント</u>:</i></div>
<div class="code" style="top:401.00px;"><i>'[1] <u>について、</u></i></div>
<div class="code" style="top:412.05px;"><i>'A<u>列のデータの先頭行は、</u>1, 4, 7, 10, ... <u>行目。</u></i></div>
<div class="a" style="left:494px;top:0;width:11px;height:469px;background:#ebebeb;"></div><div class="a" style="left:494px;top:0;width:11px;height:5.500px;background:#fff;border-bottom:1px solid #777;"></div>
<div class="a" style="left:495px;top:5.5px;width:10px;height:11px;background:#f0f0f0;border:1px solid #fff;border-right-color:#555;border-bottom-color:#555;"></div>
<svg class="a" style="left:495px;top:5.5px" width="10" height="11" viewBox="0 0 10 10"><path d="M2 6.500h6l-3-3.500z" fill="#111"/></svg>
<div class="a" style="left:495px;top:458px;width:10px;height:11px;background:#f0f0f0;border:1px solid #fff;border-right-color:#555;border-bottom-color:#555;"></div>
<svg class="a" style="left:495px;top:458px" width="10" height="11" viewBox="0 0 10 10"><path d="M2 3.500h6l-3 3.500z" fill="#111"/></svg>
<div class="a" style="left:0;top:469px;width:505px;height:12px;background:#f4f4f4;"></div>
<div class="a" style="left:494px;top:469px;width:11px;height:12px;background:#f0f0f0;"></div>
<div class="a" style="left:4px;top:469.500px;width:11px;height:11px;background:#f0f0f0;border:1px solid #fff;border-right-color:#555;border-bottom-color:#555;"></div>
<div class="a" style="left:15px;top:469.500px;width:11px;height:11px;background:#fff;border:1px solid #555;border-right-color:#fff;border-bottom-color:#fff;"></div>
<svg class="a" style="left:4px;top:468.500px" width="22" height="11" viewBox="0 0 22 11"><path d="M2.500 4h6M2.500 6.500h6M13.500 3h6M13.500 5.500h6M13.500 8h6" stroke="#111" stroke-width="1.200"/></svg>
<div class="a" style="left:26px;top:469.5px;width:10px;height:11px;background:#f0f0f0;border:1px solid #fff;border-right-color:#555;border-bottom-color:#555;"></div>
<svg class="a" style="left:26px;top:469.5px" width="10" height="11" viewBox="0 0 10 10"><path d="M6.500 2v6l-3.500-3z" fill="#111"/></svg>
<div class="a" style="left:36px;top:469.500px;width:38px;height:11px;background:#f0f0f0;border:1px solid #fff;border-right-color:#555;border-bottom-color:#555;"></div>
<div class="a" style="left:484px;top:469.5px;width:10px;height:11px;background:#f0f0f0;border:1px solid #fff;border-right-color:#555;border-bottom-color:#555;"></div>
<svg class="a" style="left:484px;top:469.5px" width="10" height="11" viewBox="0 0 10 10"><path d="M3.500 2v6l3.500-3z" fill="#111"/></svg>
</div>
</div>
</div><div class="a" id="tray" style="left:925px;top:431.5px;width:133.500px;height:161px;border-radius:6px;background:linear-gradient(180deg,#eef0f2,#e2e5e8);border:1px solid #8a9094;box-shadow:0 1px 5px rgba(0,0,0,0.350),inset 0 0 0 1px rgba(255,255,255,0.700);">
<div class="a" style="left:5px;top:5px;width:122px;height:149px;background:#fff;border:1px solid #a9b0b6;border-radius:2px;overflow:hidden;">
<div class="a" style="left:0;top:118px;width:122px;height:31px;background:#f0f4fa;border-top:1px solid #dfe6ef;"></div>
<div class="a ui" style="left:0;top:127px;width:121px;text-align:center;font-size:8.800px;line-height:12px;color:#3a78b8;white-space:nowrap;">カスタマイズ...</div>
</div>
<svg class="a" style="left:10px;top:8.5px;" width="100" height="110" viewBox="0 0 100 110">
<!-- row1 y=471 => local 11 ; cols x=1036 => 11, 1058 => 33, 1079 => 54 -->
<rect x="6.500" y="6" width="9.500" height="10.500" rx="1.500" fill="#f0d21c" stroke="#2a2a1a" stroke-width="1.100"/><path d="M8.500 9.500h5.500M8.500 12h4.500M8.500 14h5.500" stroke="#3a3a2a" stroke-width="0.900"/>
<path d="M28.500 14.500a3 3 0 0 1 0.500-5.800a4.300 4.300 0 0 1 8-0.300a3.200 3.200 0 0 1 0.500 6.100z" fill="#f4f8fc" stroke="#7aa0c8" stroke-width="0.800"/><path d="M33 13.500v-4M31 11l2-2l2 2" stroke="#2a6ac0" stroke-width="1.100" fill="none"/>
<rect x="49.500" y="6" width="11" height="9" fill="#1a2a5a" stroke="#0a1230" stroke-width="0.800"/><rect x="51" y="7.500" width="5" height="4" fill="#c8d4ec"/>
<!-- row2 y=493 => 33 -->
<path d="M7 30v3.500M11 30v3.500" stroke="#4a5a4a" stroke-width="1.200"/><rect x="5.500" y="33" width="7" height="5" rx="1" fill="#5a6a5a"/><path d="M9 38v2.500" stroke="#4a5a4a" stroke-width="1.300"/><circle cx="13" cy="37" r="3.300" fill="#2a9a3a"/><path d="M11.300 37l1.300 1.300l2.200-2.500" stroke="#fff" stroke-width="0.900" fill="none"/>
<path d="M29.500 28v11.500" stroke="#8a8a8a" stroke-width="1.300"/><path d="M30.500 28.500q2.500-1.200 4.500 0t4.500 0v6q-2.500 1.200-4.500 0t-4.500 0z" fill="#f2f2f2" stroke="#9a9a9a" stroke-width="0.800"/>
<path d="M50 31.500h2l2.500-2.300v8.600l-2.500-2.300h-2z" fill="#e8e8e8" stroke="#9a9a9a" stroke-width="0.700"/>
<!-- row3 y=515 => 55 -->
<path d="M4.500 59.500h12v-8z" fill="#c8c8c8" stroke="#8a8a8a" stroke-width="0.700"/><path d="M8 59.500v-2.300M11 59.500v-4.300M14 59.500v-6.300" stroke="#f4f4f4" stroke-width="0.800"/>
<rect x="28" y="49.500" width="10" height="10" rx="2.500" fill="#1f8a86"/><circle cx="33" cy="54.500" r="3" fill="none" stroke="#fff" stroke-width="1.200"/><circle cx="33" cy="54.500" r="1" fill="#fff"/><path d="M36.500 55l3.300 5.500h-6.600z" fill="#d8281c"/><path d="M36.500 57v1.700" stroke="#fff" stroke-width="0.800"/>
<path d="M50 51.500l3-2l5 1.500l2 4l-2 4.500h-6.500l-2-3z" fill="#2a2a2a"/><path d="M51.500 53l4 1.500l3-1" stroke="#e8c020" stroke-width="1.300" fill="none"/><circle cx="56" cy="57" r="1.700" fill="#e8c020"/>
<!-- row4 y=537 => 77 -->
<rect x="5" y="71" width="12" height="11.500" rx="2.500" fill="#eef5fc" stroke="#c4d4e4" stroke-width="0.700"/><path d="M8 80a2 2 0 0 1 0.300-4a3 3 0 0 1 5.600-0.200a2.100 2.100 0 0 1 0.300 4.200z" fill="#1e7fd8"/>
<circle cx="33" cy="77" r="5.600" fill="#e83a24"/><path d="M30 74.500l6 5M36 74.500l-6 5M33 73.500v7M29.500 77h7" stroke="#f8d8a0" stroke-width="0.900"/>
<circle cx="54.500" cy="76.500" r="4.500" fill="#f0f0f0" stroke="#9a9a9a" stroke-width="0.700"/><path d="M54.500 73.500v3l2 1" stroke="#888" stroke-width="0.800" fill="none"/><circle cx="57.500" cy="80.500" r="2.300" fill="#e84020"/><circle cx="54" cy="81.500" r="1.600" fill="#f0a020"/>
<!-- row5 y=559 => 99 -->
<rect x="5.500" y="93.500" width="11" height="11" rx="2.500" fill="#3ab83a"/><ellipse cx="11" cy="99" rx="3.800" ry="2.600" fill="#dff4d8" transform="rotate(-35 11 99)"/>
<path d="M28.500 93.500h7l2.500 2.500v9h-9.500z" fill="#f6f4f0" stroke="#b8b0a8" stroke-width="0.800"/><text x="33" y="102" text-anchor="middle" font-family="Liberation Serif, serif" font-weight="bold" font-size="7.500" fill="#c8281c">A</text>
<rect x="49" y="94" width="12" height="9" fill="#1a2a5a"/><rect x="50.500" y="95.500" width="9" height="6" fill="#e8eef8"/><path d="M52 98.500h2.500M56 98.500h2.500" stroke="#1a2a5a" stroke-width="1.500"/>
<rect x="71.500" y="94" width="11.500" height="9" fill="#d82a2a"/><rect x="73" y="95.500" width="8.500" height="4" fill="#3a8ae8"/><path d="M71.500 104.500h11.500" stroke="#2a4ab8" stroke-width="1.500"/>
</svg>
</div>
<div class="a" id="ctx" style="left:992px;top:442px;width:110.5px;height:96.500px;background:#f1f1f1;border:1px solid #979797;box-shadow:2px 2px 3px rgba(0,0,0,0.350);overflow:hidden;">
<div class="a" style="left:1.500px;top:48.500px;width:104px;height:15.500px;border:1px solid #bcd5f2;border-radius:2px;background:linear-gradient(180deg,#f2f7fd,#e1ecfa);"></div>
<div class="a" style="left:22.500px;top:4px;font-family:'Liberation Sans',sans-serif;font-size:9.200px;font-weight:bold;line-height:12px;color:#111;white-space:nowrap;">Show Main</div>
<div class="a" style="left:22.500px;top:19.5px;font-family:'Liberation Sans',sans-serif;font-size:9.200px;font-weight:normal;line-height:12px;color:#9a9a9a;white-space:nowrap;">Record</div>
<div class="a" style="left:22.500px;top:34.5px;font-family:'Liberation Sans',sans-serif;font-size:9.200px;font-weight:normal;line-height:12px;color:#111;white-space:nowrap;">Pause</div>
<div class="a" style="left:22.500px;top:49.5px;font-family:'Liberation Sans',sans-serif;font-size:9.200px;font-weight:normal;line-height:12px;color:#111;white-space:nowrap;">Stop</div>
<div class="a" style="left:22.500px;top:64.5px;font-family:'Liberation Sans',sans-serif;font-size:9.200px;font-weight:normal;line-height:12px;color:#111;white-space:nowrap;">Stop Later</div>
<div class="a" style="left:22.500px;top:79.5px;font-family:'Liberation Sans',sans-serif;font-size:9.200px;font-weight:normal;line-height:12px;color:#111;white-space:nowrap;">Exit</div>
<svg class="a" style="left:98.500px;top:68px" width="5" height="7" viewBox="0 0 5 7"><path d="M0.500 0.500l3.500 3l-3.500 3z" fill="#111"/></svg>
</div>
<svg class="a" style="left:1028px;top:499px;" width="14" height="20" viewBox="0 0 14 20"><path d="M1 1v14l3.300-3l2.500 5.800l2.600-1.100l-2.500-5.700h4.600z" fill="#fff" stroke="#1a1a1a" stroke-width="1.100" stroke-linejoin="round"/></svg>
<div class="a" id="tb7" style="left:0px;top:597.5px;width:1101px;height:22px;background:linear-gradient(90deg,#0c1a20 0%,#1a3037 10%,#17292f 30%,#0f1b20 50%,#0c1418 100%);">
<div class="a" style="left:0;top:0;width:1101px;height:22px;background:linear-gradient(180deg,rgba(190,220,225,0.550) 0,rgba(120,160,170,0.250) 1.5px,rgba(255,255,255,0.060) 3px,rgba(255,255,255,0.040) 10px,rgba(0,0,0,0.150) 11px,rgba(0,0,0,0.250) 100%);"></div>
<svg class="a" style="left:5px;top:-2px;" width="28" height="26" viewBox="0 0 28 26">
<defs><radialGradient id="orb" cx="50%" cy="35%" r="65%"><stop offset="0" stop-color="#8fd0f4"/><stop offset="0.500" stop-color="#2f86cc"/><stop offset="0.850" stop-color="#1a5aa0"/><stop offset="1" stop-color="#5ec8f0"/></radialGradient></defs>
<circle cx="14" cy="13" r="12.500" fill="url(#orb)" stroke="#0a2a4a" stroke-width="0.800"/>
<path d="M7.500 8.300q3-1.600 6 0l-1 4.300q-3-1.500-6 0z" fill="#e8562a"/>
<path d="M14.600 8.500q3 1.500 6-0.300l-1 4.300q-3 1.700-6 0.300z" fill="#8cc63f"/>
<path d="M6.200 13.700q3-1.600 6 0l-1 4.300q-3-1.500-6 0z" fill="#2fa3e8"/>
<path d="M13.300 13.900q3 1.500 6-0.300l-1 4.300q-3 1.700-6 0.300z" fill="#f7c62a"/>
<ellipse cx="14" cy="7" rx="9" ry="5" fill="rgba(255,255,255,0.180)"/>
</svg>
<div class="a" style="left:40px;top:5.5px;width:1px;height:1px;background:#3f5258;box-shadow:2px 0 0 #3f5258,4px 0 0 #3f5258,0 2px 0 #3f5258,2px 2px 0 #3f5258,4px 2px 0 #3f5258,0 4px 0 #3f5258,2px 4px 0 #3f5258,4px 4px 0 #3f5258,0 6px 0 #3f5258,2px 6px 0 #3f5258,4px 6px 0 #3f5258,0 8px 0 #3f5258,2px 8px 0 #3f5258,4px 8px 0 #3f5258,0 10px 0 #3f5258,2px 10px 0 #3f5258,4px 10px 0 #3f5258;"></div>
<div class="a" style="left:52.5px;top:2px;width:26px;height:19px;border-radius:2px;background:linear-gradient(180deg,#47555a,#1e292d 55%,#222f33);border:1px solid #6d7b80;"></div>
<svg class="a" style="left:58.5px;top:5px;" width="14" height="13" viewBox="0 0 14 13"><rect x="5" y="1" width="8" height="11" fill="#e9f2ec"/><path d="M7 3.500h5M7 6.500h5M7 9.500h5" stroke="#1f7a45" stroke-width="1.200"/><rect x="0.500" y="2" width="8" height="9" fill="#1d7044"/><path d="M2.500 4l4 5M6.500 4l-4 5" stroke="#fff" stroke-width="1.300"/></svg>
<div class="a" style="left:84.3px;top:1.8px;width:29px;height:19.500px;border-radius:2px;background:linear-gradient(180deg,#b9c0c3,#868e92 50%,#767e82 55%,#9aa2a6);border:1px solid #c9d0d3;"></div>
<svg class="a" style="left:92.5px;top:5px;" width="14" height="12" viewBox="0 0 14 12"><rect x="0.500" y="1" width="11" height="9" rx="2" fill="#1e9be0"/><path d="M3 4h4v3.500h-4zM7.300 5.500l2.200-1.500v3.500z" fill="#fff"/><circle cx="11" cy="8.500" r="2.200" fill="#b8c43a"/></svg>
<div class="a" style="left:853px;top:3px;width:62px;height:19px;border-radius:8px 0 0 0;border-top:1px solid #5a6a70;border-left:1px solid #46565c;background:linear-gradient(180deg,#27363c,#101a1e);"></div>
<svg class="a" style="left:854px;top:4.5px;" width="32" height="15" viewBox="0 0 32 15"><path d="M1 13.500v-2.500h5v-2.800h5v-2.800h5v-2.800h5v-2.800h8.500v13.700z" fill="none" stroke="#e8eeea" stroke-width="1.300"/><rect x="7" y="9.400" width="3.800" height="3.400" fill="#1fa83c"/><rect x="12" y="6.600" width="3.800" height="6.200" fill="#1fa83c"/><rect x="17" y="3.800" width="3.800" height="9" fill="#1fa83c"/><rect x="22" y="1.500" width="6.500" height="11.300" fill="#1fa83c"/><path d="M21.500 1.500v11.300" stroke="#0c5a20" stroke-width="0.600"/></svg>
<svg class="a" style="left:893px;top:5px;" width="14" height="12" viewBox="0 0 14 12"><path d="M7 4.500v7M7 5l-2.300 6.500M7 5l2.300 6.500" stroke="#f0f0f0" stroke-width="1.100" fill="none"/><circle cx="7" cy="3.500" r="1.300" fill="#f0f0f0"/><path d="M3.800 1.200a4 4 0 0 0 0 5M10.200 1.200a4 4 0 0 1 0 5M1.800 0.300a6 6 0 0 0 0 7M12.200 0.300a6 6 0 0 1 0 7" stroke="#f0f0f0" stroke-width="1" fill="none"/></svg>
<div class="a" style="left:917.5px;top:3px;width:176px;height:19px;border-radius:9px 0 0 0;border-top:1px solid #66767c;border-left:1px solid #4c5c62;background:linear-gradient(180deg,#2c3c42,#121c20);"></div>
<div class="a" style="left:926px;top:4.3px;width:35px;height:14.500px;border:1px solid #7fd08a;border-radius:1.500px;background:linear-gradient(180deg,#3fbf52,#128a2a 55%,#0f7a24);"></div>
<div class="a" style="left:961px;top:8px;width:2.500px;height:7px;border:1px solid #9ad0a0;border-left:none;border-radius:0 1.500px 1.500px 0;"></div>
<div class="a" style="left:926px;top:5px;width:35px;text-align:center;font-family:'Liberation Sans',sans-serif;font-size:9px;line-height:12px;color:#fff;">100%</div>
<svg class="a" style="left:970px;top:3.5px;" width="90" height="16" viewBox="0 0 90 16">
<rect x="1" y="4.500" width="9.500" height="7.500" rx="2.500" fill="none" stroke="#dcdcdc" stroke-width="1.300"/><path d="M6 8h6.500" stroke="#dcdcdc" stroke-width="2.200"/>
<rect x="15.500" y="1.500" width="12.500" height="13" fill="#8a9094" stroke="#c8ccd0" stroke-width="0.900"/><path d="M19 9.500h5.500l-2.750-3z" fill="#fff"/>
<path d="M34 3.500h9.500v6h-5l-2.500 2.500v-2.500h-2z" fill="#dde6ea"/><path d="M34 3.500h9.500v2.200h-9.500z" fill="#5aa0d8"/>
<path d="M52 11.500a2.800 2.800 0 0 1 0.500-5.500a3.800 3.800 0 0 1 7-0.500a3 3 0 0 1 1 6z" fill="#f2f2f2"/><path d="M55.500 9.500l6-2.500" stroke="#1a262b" stroke-width="0.700"/>
<path d="M71 3l3 2l-3 2l-3-2zM77 3l3 2l-3 2l-3-2zM71 7l3 2l-3 2l-3-2zM77 7l3 2l-3 2l-3-2zM74 10l3 2l-3 2l-3-2z" fill="#f4f4f4"/>
</svg>
<div class="a" style="left:1060.5px;top:6px;font-family:'Liberation Sans',sans-serif;font-size:9.300px;line-height:12px;color:#fff;white-space:nowrap;">15:20</div>
<div class="a" style="left:1092.5px;top:0px;width:9px;height:22px;border-left:1px solid #55656b;background:linear-gradient(90deg,#2a3a40,#0e161a);"></div>
</div>
<svg class="a" style="left:516.5px;top:368.5px;" width="10" height="14" viewBox="0 0 10 14"><path d="M1 1v10l2.500-2.300l1.800 4l1.600-0.700l-1.800-3.900h3.400z" fill="#fff" stroke="#222" stroke-width="0.900"/></svg>
<div class="a" style="left:478px;top:310.5px;font-family:'Liberation Sans',sans-serif;font-size:14.5px;line-height:15px;color:#1a14c8;white-space:nowrap;">www.thundershare.net</div>
</div>
<div class="a" id="gomb" style="left:0;top:638.500px;width:1280px;height:47.500px;background:#292725;overflow:hidden;">
<div class="a" style="left:0;top:0;width:1280px;height:17.500px;background:#2c2a28;border-top:1px solid #3b3937;"></div>
<div class="a" style="left:5px;top:5.5px;font-family:'Liberation Mono',monospace;font-weight:bold;font-size:8.300px;line-height:11px;color:#c98f3e;white-space:nowrap;letter-spacing:0px;">00:08:12</div>
<div class="a" style="left:49px;top:8.8px;width:1052px;height:3.500px;background:#15120f;border-radius:2px;"></div>
<div class="a" style="left:49px;top:9.7px;width:1052px;height:1.600px;background:#ef9a36;"></div>
<div class="a" style="left:712px;top:6px;width:9px;height:9px;border-radius:5px;background:#fff;border:1px solid #3a2a18;"></div>
<div class="a" style="left:715px;top:9px;width:3px;height:3px;border-radius:2px;background:#8a5a20;"></div>
<div class="a" style="left:1105.5px;top:5.5px;font-family:'Liberation Mono',monospace;font-weight:bold;font-size:8.300px;line-height:11px;color:#77736e;white-space:nowrap;">00:12:54</div>
<svg class="a" style="left:1155.5px;top:5.5px;" width="13" height="10" viewBox="0 0 13 10"><path d="M0.500 3.200h2.500l3-2.700v9l-3-2.700h-2.500z" fill="#b9b5b0"/><path d="M7.800 3a3 3 0 0 1 0 4M9.500 1.500a5 5 0 0 1 0 7" stroke="#b9b5b0" stroke-width="1.100" fill="none"/></svg>
<div class="a" style="left:1171.5px;top:9.5px;width:64px;height:2.500px;background:#141210;border-radius:1px;"></div>
<div class="a" style="left:1171.5px;top:9.7px;width:37.500px;height:1.700px;background:#ef9a36;"></div>
<div class="a" style="left:13px;top:26.5px;width:4px;height:12px;background:#e6e6e6;"></div>
<div class="a" style="left:19px;top:26.5px;width:4px;height:12px;background:#e6e6e6;"></div>
<div class="a" style="left:41.5px;top:29.5px;width:7px;height:7px;background:#dcdcdc;border-radius:1px;"></div>
<svg class="a" style="left:65.5px;top:27.7px;" width="10" height="10" viewBox="0 0 10 10"><rect x="0.300" y="0.500" width="2" height="9" fill="#e6e6e6"/><path d="M9.300 0.500v9l-6.300-4.500z" fill="#e6e6e6"/></svg>
<svg class="a" style="left:88px;top:27.7px;" width="10" height="10" viewBox="0 0 10 10"><rect x="7.700" y="0.500" width="2" height="9" fill="#e6e6e6"/><path d="M0.700 0.500v9l6.300-4.500z" fill="#e6e6e6"/></svg>
<div class="a" style="left:107px;top:22.3px;width:974px;height:20px;background:#151413;border-radius:3px;border:1px solid #0d0c0b;"></div>
<div class="a ui" style="left:119px;top:26px;font-size:10px;line-height:13px;color:#d9d9d9;white-space:nowrap;">再生</div>
<div class="a" style="left:1085.5px;top:22.5px;width:22px;height:19.500px;background:linear-gradient(180deg,#514e4a,#3f3c39);border:1px solid #2a2826;border-radius:2px;box-shadow:inset 0 1px 0 rgba(255,255,255,0.080);"></div>
<div class="a" style="left:1110.5px;top:22.5px;width:21.5px;height:19.500px;background:linear-gradient(180deg,#514e4a,#3f3c39);border:1px solid #2a2826;border-radius:2px;box-shadow:inset 0 1px 0 rgba(255,255,255,0.080);"></div>
<div class="a" style="left:1135px;top:22.5px;width:21.5px;height:19.500px;background:linear-gradient(180deg,#514e4a,#3f3c39);border:1px solid #2a2826;border-radius:2px;box-shadow:inset 0 1px 0 rgba(255,255,255,0.080);"></div>
<div class="a" style="left:1159.5px;top:22.5px;width:22px;height:19.500px;background:linear-gradient(180deg,#514e4a,#3f3c39);border:1px solid #2a2826;border-radius:2px;box-shadow:inset 0 1px 0 rgba(255,255,255,0.080);"></div>
<svg class="a" style="left:1085.5px;top:22.5px;" width="22" height="19" viewBox="0 0 22 19"><text x="11" y="8.500" text-anchor="middle" font-family="Liberation Sans, sans-serif" font-weight="bold" font-size="6" fill="#bdb9b4">360°</text><path d="M2.500 8.500c0 3 4 5 8.500 5s8.500-2 8.500-5" fill="none" stroke="#bdb9b4" stroke-width="1.300"/><path d="M8 11.500l3.500 2l-3.500 2.300z" fill="#bdb9b4"/></svg>
<svg class="a" style="left:1110.5px;top:22.5px;" width="22" height="19" viewBox="0 0 22 19"><path d="M5 3.500v12M11 3.500v12M17 3.500v12" stroke="#bdb9b4" stroke-width="1.200"/><rect x="3" y="10" width="4" height="2.600" fill="#d4d0cb"/><rect x="9" y="6" width="4" height="2.600" fill="#d4d0cb"/><rect x="15" y="9" width="4" height="2.600" fill="#d4d0cb"/></svg>
<div class="a" style="left:1135px;top:27px;width:21.500px;text-align:center;font-family:'Liberation Sans',sans-serif;font-weight:bold;font-size:7.200px;line-height:10px;color:#c9c5c0;letter-spacing:0.300px;">SUB</div>
<svg class="a" style="left:1159.5px;top:22.5px;" width="22" height="19" viewBox="0 0 22 19"><path d="M4 6.500h3l1.200-2h5.600l1.200 2h3v8.500h-14z" fill="#bdb9b4"/><circle cx="11" cy="10.500" r="3" fill="#46433f" stroke="#8a8681" stroke-width="0.800"/></svg>
<svg class="a" style="left:1193.5px;top:27.3px;" width="10" height="10" viewBox="0 0 10 10"><path d="M0.300 5.800l4.700-5.300l4.700 5.300zM0.300 7.300h9.400v2h-9.400z" fill="#e6e6e6"/></svg>
<div class="a" style="left:1217px;top:28px;width:9.500px;height:1.800px;background:#e6e6e6;box-shadow:0 3.500px 0 #e6e6e6,0 7px 0 #e6e6e6;"></div>
<div class="a" style="left:1241.5px;top:4px;width:34.500px;height:40px;background:linear-gradient(180deg,#3e3b38,#343230);border:1px solid #1d1c1a;box-shadow:inset 0 0 0 1px #4a4744;"></div>
<svg class="a" style="left:1253.5px;top:15px;" width="12" height="18" viewBox="0 0 12 18"><path d="M2 1.500l7.500 7.500l-7.500 7.500" fill="none" stroke="#f09a30" stroke-width="2"/></svg>
</div>
<div class="a" id="tb10" style="left:0;top:686px;width:1280px;height:34px;background:#0b0d18;overflow:hidden;">
<svg class="a" style="left:12.5px;top:10px;" width="15" height="15" viewBox="0 0 15 15"><path d="M0 2.100l6.100-0.850v5.900h-6.100zM7 1.100l8-1.100v7.150h-8zM0 8h6.100v5.900l-6.100-0.850zM7 8h8v7.150l-8-1.100z" fill="#fff"/></svg>
<div class="a" style="left:40px;top:0px;width:287px;height:34px;background:#f3f3f3;"></div>
<div class="a" style="left:48.5px;top:8.8px;width:17px;height:17px;border-radius:9px;border:2.200px solid #1a1a1a;"></div>
<div class="a ui" style="letter-spacing:-0.908px;left:73px;top:10.5px;font-size:11px;line-height:14px;color:#2b2b2b;white-space:nowrap;">ここに入力して検索</div>
<svg class="a" style="left:304.5px;top:10.5px;" width="10" height="14" viewBox="0 0 10 14"><rect x="3" y="0.600" width="4" height="8" rx="2" fill="none" stroke="#222" stroke-width="1.100"/><path d="M5 2v4" stroke="#222" stroke-width="1.400"/><path d="M1 6.500a4 4 0 0 0 8 0M5 10.500v2.500" fill="none" stroke="#222" stroke-width="1.100"/></svg>
<svg class="a" style="left:339px;top:10.5px;" width="16" height="14" viewBox="0 0 16 14"><rect x="1.500" y="4" width="9" height="6" fill="none" stroke="#fff" stroke-width="1.300"/><path d="M1.500 1h9M1.500 13h9M13.500 1v3M13.500 5.500v3M13.500 10v3" stroke="#fff" stroke-width="1.300"/></svg>
<svg class="a" style="left:379.5px;top:7px;" width="20" height="20" viewBox="0 0 20 20"><circle cx="10" cy="10" r="9.500" fill="#e33b2e"/><path d="M10 10L1.800 5.200A9.500 9.500 0 0 0 6 18.600z" fill="#2da94f"/><path d="M10 10L6 18.600A9.500 9.500 0 0 0 19.400 8.500z" fill="#fcc31e" /><path d="M10 10L19.400 8.500A9.500 9.500 0 0 0 1.800 5.200z" fill="#e33b2e"/><path d="M10 10l9.400-1.500a9.500 9.500 0 0 1-13.400 10.100z" fill="#fcc31e"/><circle cx="10" cy="10" r="4.400" fill="#fff"/><circle cx="10" cy="10" r="3.500" fill="#4486f4"/></svg>
<div class="a" style="left:372.5px;top:31.5px;width:34.500px;height:2.500px;background:#8fc6ee;"></div>
<svg class="a" style="left:420.5px;top:8px;" width="20" height="18" viewBox="0 0 20 18"><path d="M1 3.500q0-1.500 1.500-1.500h5l1.500 1.800h8.500q1.500 0 1.500 1.500v9.500h-18z" fill="#f6d45a"/><path d="M1 6.500h18v9q0 1-1 1h-16q-1 0-1-1z" fill="#fbe38a"/><path d="M3 11h14v5.500h-14z" fill="#3f9ede"/><path d="M6.500 13.500h7v3h-7z" fill="#fbe38a"/></svg>
<div class="a" style="left:413.5px;top:31.5px;width:34.500px;height:2.500px;background:#8fc6ee;"></div>
<div class="a" style="left:452px;top:0px;width:26px;height:34px;background:#5b8a58;"></div>
<div class="a" style="left:478px;top:0px;width:15px;height:34px;background:#5e5e66;"></div>
<div class="a" style="left:452px;top:31.5px;width:41px;height:2.500px;background:#5fe83a;"></div>
<svg class="a" style="left:461.5px;top:5.5px;" width="24" height="22" viewBox="0 0 24 22"><rect x="0.500" y="0.500" width="20" height="19.500" rx="3" fill="#e0262b"/><circle cx="10" cy="11.500" r="5.300" fill="#fff"/><circle cx="10" cy="11.500" r="2.300" fill="#e0262b"/><circle cx="4.500" cy="5.200" r="1.500" fill="#fff"/><circle cx="8.300" cy="3.600" r="1.500" fill="#fff"/><circle cx="12.300" cy="3.600" r="1.500" fill="#fff"/><circle cx="16" cy="5.200" r="1.500" fill="#fff"/><path d="M13 13v8.500l8-4.250z" fill="#f2f2f2" stroke="#8a8a8a" stroke-width="0.600"/></svg>
<div class="a" style="left:892px;top:8.8px;width:40.500px;height:16.500px;border:1.500px solid #fff;background:linear-gradient(90deg,#27a844 0,#27a844 34px,#0d0f1c 34px);"></div>
<div class="a" style="left:932.5px;top:13px;width:2.500px;height:8px;background:#fff;"></div>
<div class="a" style="left:892px;top:10px;width:37px;text-align:center;font-family:'Liberation Sans',sans-serif;font-size:11px;line-height:14px;color:#fff;">87%</div>
<svg class="a" style="left:939.5px;top:11px;" width="8" height="13" viewBox="0 0 8 13"><path d="M1.800 0.500v3.500M6.200 0.500v3.500" stroke="#fff" stroke-width="1.400"/><path d="M0.500 4h7v3q0 2.500-2.500 2.800v2.700h-2v-2.700q-2.500-0.300-2.500-2.800z" fill="#fff"/></svg>
<svg class="a" style="left:965px;top:6.5px;" width="220" height="22" viewBox="0 0 220 22">
<g fill="none" stroke="#fff" stroke-width="1.200"><circle cx="6.500" cy="10" r="2.300"/><path d="M2.500 17.500a4 4 0 0 1 8 0"/><circle cx="12.500" cy="6" r="2"/><path d="M11.500 11a3.500 3.500 0 0 1 5 2"/></g>
<path d="M37 13.500l5.500-5.500l5.500 5.500" fill="none" stroke="#fff" stroke-width="1.400"/>
<rect x="63" y="15.500" width="13" height="2.500" fill="#1a3ad8"/><path d="M66 15l1.500-6h4l2 6z" fill="#e8ecf8"/><circle cx="70" cy="6.500" r="2.200" fill="#cfd8f4"/><path d="M64 12l3-3M75 11l-2-3" stroke="#6a8af0" stroke-width="1.200"/>
<rect x="91" y="7.500" width="13" height="8" fill="none" stroke="#fff" stroke-width="1.200"/><rect x="93" y="9.500" width="8" height="4" fill="#fff"/><path d="M89 6l3 2" stroke="#fff" stroke-width="1.200"/>
<g fill="none" stroke="#fff" stroke-width="1.300"><path d="M119 17a1 1 0 1 0 0.100 0M116.500 13.500a4.500 4.500 0 0 1 4 3.500M116 10a8 8 0 0 1 8 7M116.500 6.500a11.500 11.500 0 0 1 11 10.500" /></g>
<path d="M146 5l3.300 2.200l-3.300 2.200l-3.300-2.200zM152.500 5l3.300 2.200l-3.300 2.200l-3.300-2.200zM146 9.500l3.300 2.200l-3.300 2.200l-3.300-2.200zM152.500 9.500l3.300 2.200l-3.300 2.200l-3.300-2.200zM149.250 13l3.300 2.200l-3.300 2.200l-3.300-2.200z" fill="#fff"/>
<path d="M172 17.500l2.300-12h1.400l2.300 12h-1.800l-0.500-3h-1.400l-0.500 3zM174.500 12.500h1l-0.500-4z" fill="#fff"/><path d="M175 2.500v3" stroke="#fff" stroke-width="1"/>
<circle cx="198" cy="10.500" r="5.800" fill="#2a6fdc"/><circle cx="203" cy="14" r="2.600" fill="#e8452c"/><circle cx="205" cy="10" r="1.500" fill="#f5c21e"/><circle cx="200.500" cy="17" r="1.400" fill="#3bb34a"/>
</svg>
<div class="a" style="left:1170px;top:3.5px;width:70px;text-align:center;font-family:'Liberation Sans',sans-serif;font-size:9.600px;line-height:12px;color:#fff;letter-spacing:-0.100px;">10:05</div>
<div class="a" style="left:1170px;top:19px;width:70px;text-align:center;font-family:'Liberation Sans',sans-serif;font-size:9.600px;line-height:12px;color:#fff;letter-spacing:0.250px;">2019/01/03</div>
<svg class="a" style="left:1245px;top:10px;" width="20" height="20" viewBox="0 0 20 20"><path d="M1 1h12.500v10.500h-8.500l-4 3.500z" fill="#fff"/><path d="M3 4h8.500M3 6.500h8.500M3 9h6" stroke="#0d0f1c" stroke-width="0.900"/><circle cx="13.500" cy="13.500" r="4.800" fill="#1a1c28" stroke="#e8e8e8" stroke-width="1"/><text x="13.500" y="16.600" text-anchor="middle" font-family="Liberation Sans, sans-serif" font-size="8.500" fill="#fff">1</text></svg>
</div>
</body></html>
